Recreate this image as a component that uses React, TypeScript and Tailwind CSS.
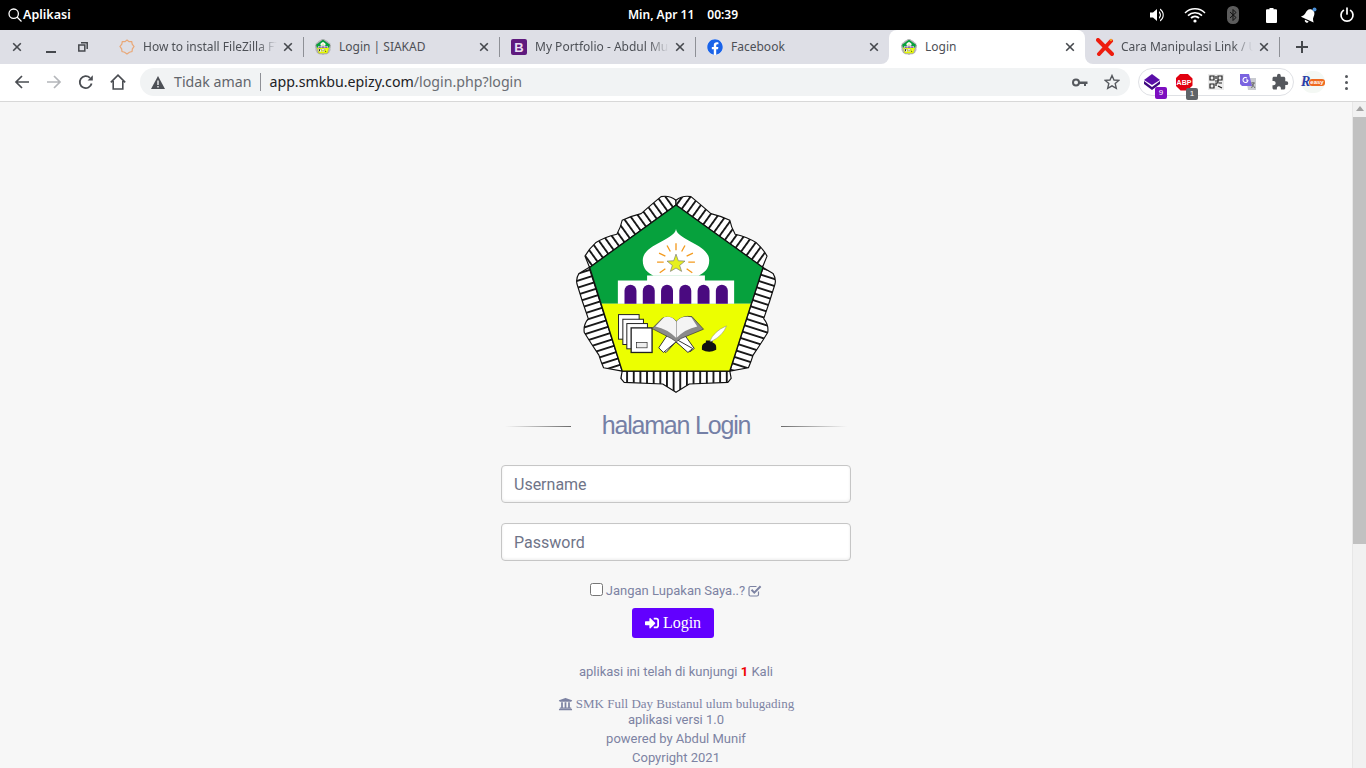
import { useId, type ReactNode } from 'react';
import { FaFacebook, FaSignInAlt, FaUniversity } from 'react-icons/fa';
import { MdExtension } from 'react-icons/md';

const noto = "[font-family:'Noto_Sans',sans-serif]";

function Band({ d, angle, id }: { d: string; angle: number; id: string }) {
  return (
    <>
      <defs>
        <pattern id={id} width="20" height="20" patternUnits="userSpaceOnUse" patternTransform={`rotate(${angle})`}>
          <rect width="20" height="20" fill="#fff" />
          <rect width="5.5" height="20" fill="#111" />
        </pattern>
      </defs>
      <path d={d} fill={`url(#${id})`} stroke="#111" strokeWidth="3.5" strokeLinejoin="round" />
    </>
  );
}

function SchoolLogo({ className }: { className: string }) {
  const uid = useId().replace(/:/g, '');
  return (
    <svg viewBox="30 28 600 596" className={className}>
      <Band id={`${uid}a`} angle={-35.7} d="M330 58 L330 44 Q310 28 285 33 Q262 52 225 84 Q192 92 168 104 Q164 125 152 146 Q115 154 88 172 Q68 190 56 212 L70 246 Z" />
      <Band id={`${uid}b`} angle={35.7} d="M330 58 L330 44 Q350 28 375 33 Q398 52 435 84 Q468 92 492 104 Q496 125 508 146 Q545 154 572 172 Q592 190 604 212 L590 246 Z" />
      <Band id={`${uid}c`} angle={-72.3} d="M592 246 L622 264 Q632 280 628 296 Q612 350 594 400 Q610 420 606 442 Q584 478 562 510 Q556 530 548 548 L492 558 Z" />
      <Band id={`${uid}d`} angle={72.3} d="M68 246 L38 264 Q28 280 32 296 Q48 350 66 400 Q50 420 54 442 Q76 478 98 510 Q104 530 112 548 L168 558 Z" />
      <Band id={`${uid}e`} angle={0} d="M168 558 L164 580 L174 592 L290 597 L330 622 L370 597 L486 592 L496 580 L492 558 Z" />
      <path d="M70 246 L330 58 L592 246 L555 355 L105 355 Z" fill="#06a13d" />
      <path d="M105 355 L555 355 L492 558 L168 558 Z" fill="#ecff00" />
      <path d="M70 246 L330 58 L592 246 L492 558 L168 558 Z" fill="none" stroke="#111" strokeWidth="4" strokeLinejoin="round" />
      <path d="M330 130 C325 165 230 175 230 225 C230 250 245 262 262 271 L398 271 C415 262 430 250 430 225 C430 175 335 165 330 130 Z" fill="#fff" />
      <path d="M243 270 H417 V285 H505 V355 H155 V285 H243 Z" fill="#fff" />
      {[193, 248, 303, 358, 413, 468].map((x) => (
        <path key={x} d={`M${x - 18} 355 V316 A18 18 0 0 1 ${x + 18} 316 V355 Z`} fill="#4a0a80" />
      ))}
      <path d="M330 206 L337 226 L357 227 L341 240 L347 258 L330 248 L313 258 L319 240 L303 227 L323 226 Z" fill="#e6f01e" stroke="#777" strokeWidth="2" />
      <g stroke="#f39a1e" strokeWidth="4">
        <path d="M330 173 V194 M303 180 L313 198 M357 180 L347 198 M279 203 L298 212 M381 203 L362 212 M273 230 H293 M387 230 H367 M281 262 L298 250 M379 262 L362 250" />
      </g>
      <g fill="#fff" stroke="#222" strokeWidth="3">
        <rect x="157" y="388" width="62" height="74" />
        <rect x="170" y="402" width="62" height="76" />
        <rect x="182" y="415" width="62" height="76" />
        <rect x="195" y="428" width="63" height="74" strokeWidth="4" />
        <rect x="211" y="472" width="32" height="16" fill="#eee" strokeWidth="2" />
      </g>
      <path d="M280 490 L355 448 L385 490 L372 500 L330 470 L300 502 Z" fill="#fff" stroke="#333" strokeWidth="3" />
      <path d="M380 490 L305 448 L278 488 L292 502 L330 470 L366 502 Z" fill="#fff" stroke="#333" strokeWidth="3" />
      <path d="M258 430 L290 398 Q315 390 331 408 Q350 390 378 394 L413 432 L345 460 L331 470 L316 460 Z" fill="#8a8a8a" stroke="#333" strokeWidth="2" />
      <path d="M268 424 L294 396 Q316 390 330 408 L330 458 Q305 432 268 424 Z" fill="#f4f4f4" />
      <path d="M394 424 L376 396 Q348 390 332 408 L332 458 Q357 432 394 424 Z" fill="#f4f4f4" />
      <path d="M420 466 H440 V472 Q451 476 451 486 V494 Q440 500 430 500 Q418 500 408 494 V486 Q408 476 420 472 Z" fill="#111" />
      <path d="M432 468 Q444 438 482 422 Q472 450 438 468 Z" fill="#fff" stroke="#888" strokeWidth="1.5" />
    </svg>
  );
}

function CloseX({ className = '' }: { className?: string }) {
  return (
    <svg viewBox="0 0 10 10" className={`h-[10px] w-[10px] shrink-0 ${className}`}>
      <path d="M1.2 1.2 L8.8 8.8 M8.8 1.2 L1.2 8.8" stroke="#45484d" strokeWidth="1.6" fill="none" />
    </svg>
  );
}

function ZillaIcon() {
  return (
    <svg viewBox="0 0 16 16" className="h-4 w-4">
      <path d="M8 1 L10 2.6 L12.7 2.6 L13.2 5.2 L15 7.5 L13.4 9.8 L13 12.6 L10.4 13.2 L8 15 L5.6 13.2 L3 12.6 L2.6 9.8 L1 7.5 L2.8 5.2 L3.3 2.6 L6 2.6 Z" fill="none" stroke="#e9a878" strokeWidth="1.2" />
    </svg>
  );
}

function BootstrapIcon() {
  return (
    <span className="flex h-4 w-4 items-center justify-center rounded-[2px] bg-[#5f1a7e] text-[13px] font-bold leading-none text-[#e9dff2] [font-family:'Liberation_Sans',sans-serif]">
      B
    </span>
  );
}

function CrossIcon() {
  return (
    <svg viewBox="0 0 18 18" className="h-[18px] w-[18px]">
      <path d="M2 2 L16 16 M15 3 L3 16" stroke="#ee1c0e" strokeWidth="4" strokeLinecap="round" fill="none" />
      <circle cx="15" cy="2" r="1.2" fill="#f59b23" />
    </svg>
  );
}

type Tab = { title: string; icon: ReactNode; width: string; fade?: boolean; active?: boolean; sep?: boolean; cornerL?: boolean; cornerR?: boolean };

const siakad = <SchoolLogo className="h-4 w-4" />;

const tabs: Tab[] = [
  { title: 'How to install FileZilla FTP Server', icon: <ZillaIcon />, width: 'w-[196px]', fade: true, sep: true },
  { title: 'Login | SIAKAD', icon: siakad, width: 'w-[196px]', sep: true },
  { title: 'My Portfolio - Abdul Munif', icon: <BootstrapIcon />, width: 'w-[196px]', fade: true, sep: true },
  { title: 'Facebook', icon: <span className="flex h-4 w-4 rounded-full bg-white"><FaFacebook className="h-4 w-4 text-[#1a63e8]" /></span>, width: 'w-[194px]', cornerR: true },
  { title: 'Login', icon: siakad, width: 'w-[196px]', active: true },
  { title: 'Cara Manipulasi Link / URL', icon: <CrossIcon />, width: 'w-[194px]', fade: true, sep: true, cornerL: true },
];

function TabItem({ tab }: { tab: Tab }) {
  return (
    <div className={`relative flex h-[34px] shrink-0 items-center pl-[11px] pr-[10px] ${tab.width} ${tab.active ? 'rounded-t-lg bg-white' : ''}`}>
      <span className="flex w-[18px] shrink-0 items-center justify-center">{tab.icon}</span>
      <span
        className={`ml-[7px] min-w-0 flex-1 overflow-hidden whitespace-nowrap text-[12px] text-[#4d5056] ${noto} ${tab.fade ? '[mask-image:linear-gradient(to_right,black_85%,transparent)]' : ''}`}
      >
        {tab.title}
      </span>
      <CloseX className="ml-[6px]" />
      {tab.sep && <span className="absolute right-[-1px] top-[7px] h-[20px] w-px bg-[#8e9096]" />}
      {tab.cornerR && (
        <span className="absolute bottom-0 right-0 h-2 w-2 bg-white">
          <span className="block h-2 w-2 rounded-br-lg bg-[#dedfe6]" />
        </span>
      )}
      {tab.cornerL && (
        <span className="absolute bottom-0 left-0 h-2 w-2 bg-white">
          <span className="block h-2 w-2 rounded-bl-lg bg-[#dedfe6]" />
        </span>
      )}
    </div>
  );
}

function StatusIcons() {
  return (
    <div className="flex items-center justify-end">
      <span className="flex w-[38px] justify-center">
        <svg viewBox="0 0 16 16" className="h-4 w-4">
          <path d="M1 5.5 H4 L8 2 V14 L4 10.5 H1 Z" fill="#fff" />
          <path d="M10 4 A5 5 0 0 1 10 12 V10 A3 3 0 0 0 10 6 Z M11 1.5 A7.5 7.5 0 0 1 11 14.5 V13 A6 6 0 0 0 11 3 Z" fill="#fff" />
        </svg>
      </span>
      <span className="flex w-[38px] justify-center">
        <svg viewBox="0 0 22 16" className="h-4 w-[22px]" fill="none" stroke="#fff">
          <path d="M1 6 A14 14 0 0 1 21 6" strokeWidth="1.4" />
          <path d="M4 8.6 A10 10 0 0 1 18 8.6" strokeWidth="1.6" />
          <path d="M7 11 A6 6 0 0 1 15 11" strokeWidth="1.8" />
          <circle cx="11" cy="14" r="1.6" fill="#fff" stroke="none" />
        </svg>
      </span>
      <span className="flex w-[38px] justify-center">
        <svg viewBox="0 0 12 18" className="h-[18px] w-3">
          <rect width="12" height="18" rx="5.5" fill="#5c5c5c" />
          <path d="M3 6 L9 11.5 L6 14.5 V3.5 L9 6.5 L3 12" fill="none" stroke="#111" strokeWidth="1" />
        </svg>
      </span>
      <span className="flex w-[38px] justify-center">
        <svg viewBox="0 0 11 15" className="h-[15px] w-[11px]">
          <path d="M3.5 0 H7.5 V1.2 H10 A1 1 0 0 1 11 2.2 V14 A1 1 0 0 1 10 15 H1 A1 1 0 0 1 0 14 V2.2 A1 1 0 0 1 1 1.2 H3.5 Z" fill="#fff" />
        </svg>
      </span>
      <span className="flex w-[38px] justify-center">
        <svg viewBox="0 0 18 17" className="h-[17px] w-[18px]">
          <g transform="rotate(25 9 9)">
            <path d="M9 2 C12.5 2 13.5 5 13.5 8 C13.5 10.5 15 11.5 16 13 H2 C3 11.5 4.5 10.5 4.5 8 C4.5 5 5.5 2 9 2 Z" fill="#fff" />
            <path d="M7 14.2 H11 A2 2 0 0 1 7 14.2 Z" fill="#fff" />
          </g>
          <circle cx="14.5" cy="2.5" r="2" fill="#4a90d9" />
        </svg>
      </span>
      <span className="flex w-[38px] justify-center">
        <svg viewBox="0 0 16 16" className="h-4 w-4" fill="none" stroke="#fff" strokeWidth="1.7" strokeLinecap="round">
          <path d="M8 1 V7" />
          <path d="M4.4 3.4 A6 6 0 1 0 11.6 3.4" />
        </svg>
      </span>
    </div>
  );
}

function ToolbarButton({ children }: { children: ReactNode }) {
  return <span className="flex w-8 shrink-0 items-center justify-center">{children}</span>;
}

function ExtensionSlot({ children, className = '' }: { children: ReactNode; className?: string }) {
  return <span className={`relative flex w-8 shrink-0 items-center justify-center ${className}`}>{children}</span>;
}

function Toolbar() {
  return (
    <div className="flex h-[38px] shrink-0 items-start border-b border-[#d8d8d8] bg-white pl-[6px] pt-1">
      <div className="flex h-7 items-center">
        <ToolbarButton>
          <svg viewBox="0 0 16 16" className="h-4 w-4" fill="none" stroke="#4a4d52" strokeWidth="1.7">
            <path d="M15 8 H2 M8 2 L2 8 L8 14" />
          </svg>
        </ToolbarButton>
        <ToolbarButton>
          <svg viewBox="0 0 16 16" className="h-4 w-4" fill="none" stroke="#b4b6ba" strokeWidth="1.7">
            <path d="M1 8 H14 M8 2 L14 8 L8 14" />
          </svg>
        </ToolbarButton>
        <ToolbarButton>
          <svg viewBox="0 0 16 16" className="h-4 w-4" fill="none" stroke="#4a4d52" strokeWidth="1.8">
            <path d="M13.6 9.5 A6 6 0 1 1 12 3.8" />
            <path d="M14.8 1.2 V6.4 H9.6 Z" fill="#4a4d52" stroke="none" />
          </svg>
        </ToolbarButton>
        <ToolbarButton>
          <svg viewBox="0 0 16 16" className="h-4 w-4" fill="none" stroke="#4a4d52" strokeWidth="1.6">
            <path d="M0.8 8.4 L8 1.2 L15.2 8.4 M3.2 7 V15 H12.8 V7" />
          </svg>
        </ToolbarButton>
      </div>
      <div className={`ml-[6px] flex h-7 w-[990px] shrink-0 items-center rounded-full bg-[#f1f3f4] pl-[11px] text-[14.2px] ${noto}`}>
        <svg viewBox="0 0 14 13" className="h-[13px] w-[14px] shrink-0">
          <path d="M7 0 L14 13 H0 Z" fill="#4d5056" />
          <path d="M6.3 4.5 H7.7 V9 H6.3 Z M6.3 10 H7.7 V11.4 H6.3 Z" fill="#f1f3f4" />
        </svg>
        <span className="ml-[9px] text-[#62656b]">Tidak aman</span>
        <span className="ml-[9px] h-[18px] w-px bg-[#8e9096]" />
        <span className="ml-2 text-[#202124]">app.smkbu.epizy.com</span>
        <span className="text-[#6a6d73]">/login.php?login</span>
        <span className="flex-1" />
        <svg viewBox="0 0 16 9" className="mr-[9px] h-[9px] w-4">
          <circle cx="4" cy="4.5" r="3" fill="none" stroke="#55585d" strokeWidth="2" />
          <path d="M6.5 3.4 H15.5 V6 H14 V8 H12 V6 H6.5 Z" fill="#55585d" />
        </svg>
        <svg viewBox="0 0 16 16" className="mr-[10px] ml-[7px] h-4 w-4" fill="none" stroke="#55585d" strokeWidth="1.4">
          <path d="M8 1.5 L10 6 L14.8 6.4 L11.2 9.6 L12.3 14.4 L8 11.9 L3.7 14.4 L4.8 9.6 L1.2 6.4 L6 6 Z" />
        </svg>
      </div>
      <div className="ml-2 flex h-7 w-[156px] shrink-0 items-center rounded-full border border-[#dfe1e5] bg-white">
        <ExtensionSlot className="-ml-[3px]">
          <svg viewBox="0 0 18 18" className="h-[18px] w-[18px]">
            <path d="M9 1 L17 7 L9 12 L1 7 Z" fill="#5a0fa8" />
            <path d="M1 8 L9 14 L17 8 L17 11 L9 17 L1 11 Z" fill="#3e0a80" />
          </svg>
          <span className="absolute left-[19px] top-[14px] flex h-3 w-3 items-center justify-center rounded-[2px] bg-[#7d0fc0] text-[8px] leading-none text-white [font-family:'Liberation_Sans',sans-serif]">9</span>
        </ExtensionSlot>
        <ExtensionSlot>
          <span className="flex h-[17px] w-[17px] items-center justify-center bg-[#e1000f] text-[7px] font-bold leading-none text-white [clip-path:polygon(30%_0,70%_0,100%_30%,100%_70%,70%_100%,30%_100%,0_70%,0_30%)] [font-family:'Liberation_Sans',sans-serif]">ABP</span>
          <span className="absolute left-[18px] top-[14px] flex h-3 w-3 items-center justify-center rounded-[2px] bg-[#5f6368] text-[8px] leading-none text-white [font-family:'Liberation_Sans',sans-serif]">1</span>
        </ExtensionSlot>
        <ExtensionSlot>
          <svg viewBox="0 0 16 16" className="h-4 w-4">
            <rect width="16" height="16" fill="#ececec" />
            <path d="M2 2 H6 V6 H2 Z M10 2 H14 V6 H10 Z M2 10 H6 V14 H2 Z M8 2 V5 M7 7 H10 V9 H8 V12 M11 9 H14 M10 12 L14 14" fill="none" stroke="#222" strokeWidth="1.2" />
          </svg>
        </ExtensionSlot>
        <ExtensionSlot>
          <svg viewBox="0 0 16 16" className="h-4 w-4">
            <path d="M6 4 H16 V16 H8 Z" fill="#c9cbd0" />
            <path d="M0 0 H9 L12 12 H2 L0 10 Z" fill="#7a63e0" />
            <path d="M8 6 A2.5 2.5 0 1 1 7 4 M6 6 H8" fill="none" stroke="#fff" strokeWidth="1.1" />
            <path d="M11 9 H15 M13 8 V9 M14 9 L11.5 14 M12 10 L15 14" fill="none" stroke="#666" strokeWidth="0.9" />
          </svg>
        </ExtensionSlot>
        <ExtensionSlot>
          <MdExtension className="h-[18px] w-[18px] text-[#55585d]" />
        </ExtensionSlot>
      </div>
      <span className="flex h-7 w-[38px] shrink-0 items-center justify-center">
        <span className="relative flex h-[22px] w-[24px] items-center rounded-full bg-[#f4f8f4]">
          <span className="text-[14px] font-bold italic leading-none text-[#2a3ea8] [font-family:'Liberation_Serif',serif]">R</span>
          <span className="ml-[-1px] rounded-[3px] bg-[#ef6a1f] px-px text-[6px] font-bold leading-[7px] text-white [font-family:'Liberation_Sans',sans-serif]">easy</span>
        </span>
      </span>
      <span className="ml-[9px] flex h-7 w-[10px] shrink-0 flex-col items-center justify-center gap-[3px]">
        <span className="h-[3px] w-[3px] rounded-full bg-[#55585d]" />
        <span className="h-[3px] w-[3px] rounded-full bg-[#55585d]" />
        <span className="h-[3px] w-[3px] rounded-full bg-[#55585d]" />
      </span>
    </div>
  );
}

function LoginPage() {
  return (
    <main className="flex min-w-0 flex-1 flex-col items-center overflow-hidden bg-[#f7f7f7] pt-[93px] text-[13px] text-[#7d83a3] [font-family:Roboto,sans-serif]">
      <SchoolLogo className="h-[198px] w-[200px] shrink-0" />
      <div className="mt-[15px] flex h-9 w-[350px] shrink-0 items-center">
        <span className="ml-1 h-px w-[66px] bg-[linear-gradient(to_right,transparent,#6b6b6b)]" />
        <h1 className="w-[210px] text-center text-[25px] font-normal tracking-[-1.2px] text-[#7580a6] [font-family:'Liberation_Sans',sans-serif]">
          halaman Login
        </h1>
        <span className="h-px w-[66px] bg-[linear-gradient(to_right,#6b6b6b,transparent)]" />
      </div>
      <input
        placeholder="Username"
        className="mt-[21px] h-[38px] w-[350px] shrink-0 rounded-[4px] border border-[#c6c6c6] bg-white px-3 text-[16px] shadow-[inset_0_-1px_3px_rgba(0,0,0,0.08)] placeholder:text-[#6f7488]"
      />
      <input
        type="password"
        placeholder="Password"
        className="mt-5 h-[38px] w-[350px] shrink-0 rounded-[4px] border border-[#c6c6c6] bg-white px-3 text-[16px] shadow-[inset_0_-1px_3px_rgba(0,0,0,0.08)] placeholder:text-[#6f7488]"
      />
      <label className="mt-[18px] flex h-[20px] shrink-0 items-center">
        <input type="checkbox" className="h-[13px] w-[13px]" />
        <span className="ml-[3px] mt-[3px]">Jangan Lupakan Saya..?</span>
        <svg viewBox="0 0 14 13" className="ml-[3px] mt-[2px] h-[13px] w-[14px]" fill="none" stroke="#7d83a3">
          <path d="M10.5 7.5 V10.5 A1.5 1.5 0 0 1 9 12 H2.5 A1.5 1.5 0 0 1 1 10.5 V4 A1.5 1.5 0 0 1 2.5 2.5 H8.5" strokeWidth="1.2" />
          <path d="M3.5 5.8 L6.3 8.6 L12.6 2.2" strokeWidth="2" />
        </svg>
      </label>
      <button className="mt-[9px] mr-[6px] flex h-[30px] w-[82px] shrink-0 items-center justify-center rounded-[3px] bg-[#6200ff] text-[16px] text-white [font-family:'Liberation_Serif',serif]">
        <FaSignInAlt className="mr-1 h-[14px] w-[14px]" />
        Login
      </button>
      <p className="mt-[26px] leading-[16px]">
        aplikasi ini telah di kunjungi <b className="text-[#f00000]">1</b> Kali
      </p>
      <p className="mt-4 flex items-center text-[13px] leading-[16px] [font-family:'Liberation_Serif',serif]">
        <FaUniversity className="mr-[3px] h-[14px] w-[15px]" />
        SMK Full Day Bustanul ulum bulugading
      </p>
      <p className="leading-[16px]">aplikasi versi 1.0</p>
      <p className="mt-[3px] leading-[16px]">powered by Abdul Munif</p>
      <p className="mt-[3px] leading-[16px]">Copyright 2021</p>
    </main>
  );
}

function Scrollbar() {
  return (
    <aside className="flex w-[14px] shrink-0 flex-col items-center border-l border-[#e7e7e7] bg-[#f1f1f1]">
      <span className="mt-[4px] h-0 w-0 border-x-[4px] border-b-[5px] border-x-transparent border-b-[#a3a3a3]" />
      <span className="mt-[6px] h-[427px] w-full bg-[#c1c1c1]" />
    </aside>
  );
}

export default function App() {
  return (
    <div className="flex h-screen w-full flex-col overflow-hidden">
      <header className={`grid h-[30px] shrink-0 grid-cols-[1fr_auto_1fr] items-center bg-black text-[12px] font-semibold text-white ${noto}`}>
        <div className="flex items-center pl-2">
          <svg viewBox="0 0 14 14" className="h-[14px] w-[14px]" fill="none" stroke="#fff" strokeWidth="1.3">
            <circle cx="5.7" cy="5.7" r="4.7" />
            <path d="M9 9 L13.5 13.5" />
          </svg>
          <span className="ml-px text-[12.5px]">Aplikasi</span>
        </div>
        <div className="flex gap-[13px]">
          <span>Min, Apr 11</span>
          <span>00:39</span>
        </div>
        <StatusIcons />
      </header>

      <nav className="flex h-[34px] shrink-0 items-center bg-[#dedfe6]">
        <div className="flex w-[107px] shrink-0 items-center">
          <span className="ml-3">
            <CloseX />
          </span>
          <span className="ml-[24px] mt-[9px] h-[2px] w-[10px] bg-[#45484d]" />
          <svg viewBox="0 0 10 10" className="ml-[22px] h-[10px] w-[10px]" fill="none" stroke="#45484d" strokeWidth="1.5">
            <rect x="0.8" y="3" width="6" height="6" />
            <path d="M3 0.8 H9.2 V7" />
          </svg>
        </div>
        {tabs.map((tab) => (
          <TabItem key={tab.title} tab={tab} />
        ))}
        <svg viewBox="0 0 12 12" className="ml-[17px] h-3 w-3" stroke="#45484d" strokeWidth="2">
          <path d="M6 0 V12 M0 6 H12" />
        </svg>
      </nav>

      <Toolbar />

      <div className="flex min-h-0 flex-1">
        <LoginPage />
        <Scrollbar />
      </div>
    </div>
  );
}
